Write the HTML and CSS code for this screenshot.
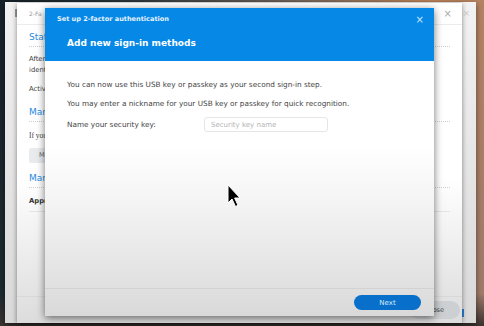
FILE: index.html
```html
<!DOCTYPE html>
<html lang="en">
<head>
    <meta charset="UTF-8">
    <meta name="viewport" content="width=device-width, initial-scale=1.0">
    <title>Set up 2-factor authentication</title>
    <link rel="stylesheet" href="styles.css">
</head>
<body>

    <div class="desktop">
        <!-- window furthest back -->
        <div class="window back-window">
            <div class="back-head"><span class="back-icon"></span><span class="back-close">&times;</span></div>
            <div class="back-foot"><span class="back-btn"></span></div>
        </div>

        <!-- personal settings window -->
        <div class="window settings-window">
            <div class="win-head">
                <span class="win-title">2-Fa</span>
                <span class="win-close">&times;</span>
            </div>
            <div class="win-body">
                <h3 class="section-title">Status</h3>
                <p class="line">After enabling, you will need to verify your<br>identity with a second sign-in step.</p>
                <p class="line">Active</p>
                <h3 class="section-title">Manage sign-in methods</h3>
                <p class="line serif">If you lose your device, use a backup code.</p>
                <span class="grey-btn">Manage</span>
                <h3 class="section-title">Manage trusted devices</h3>
                <p class="line bold">Approved devices</p>
            </div>
            <div class="win-foot">
                <span class="grey-btn pill">Close</span>
            </div>
        </div>

        <!-- the wizard -->
        <div class="window modal">
            <div class="modal-head">
                <div class="modal-bar">
                    <span class="modal-caption">Set up 2-factor authentication</span>
                    <span class="modal-close">&times;</span>
                </div>
                <h2 class="modal-title">Add new sign-in methods</h2>
            </div>
            <div class="modal-body">
                <p class="info">You can now use this USB key or passkey as your second sign-in step.</p>
                <p class="info">You may enter a nickname for your USB key or passkey for quick recognition.</p>
                <div class="field">
                    <label class="field-label" for="key-name">Name your security key:</label>
                    <input type="text" id="key-name" placeholder="Security key name">
                </div>
            </div>
            <div class="modal-foot">
                <button class="next-btn">Next</button>
            </div>
        </div>

        <svg class="cursor" width="14" height="24" viewBox="0 0 14 24">
            <path d="M1 1 L1 19 L5 15 L8.5 22.5 L11 21.3 L7.6 14 L13 14 Z" fill="#000" stroke="#fff" stroke-width="1"/>
        </svg>
    </div>

</body>
</html>
```
FILE: styles.css
```css
body {
    margin: 0;
    width: 484px;
    height: 326px;
    overflow: hidden;
    font-family: "DejaVu Sans", Verdana, sans-serif;
}

.desktop {
    position: relative;
    width: 484px;
    height: 326px;
    background:
        linear-gradient(to bottom, rgba(0, 0, 0, 0) 90%, #3b3330 100%),
        linear-gradient(100deg, #16222a 0%, #26343a 20%, #7a6a60 55%, #c98a5c 80%, #9d7a6c 100%);
}

.window {
    position: absolute;
    box-sizing: border-box;
    display: flex;
    flex-direction: column;
}

/* back-most window, only edges show */
.back-window {
    left: 5px;
    top: 2px;
    width: 471px;
    height: 321px;
    background: linear-gradient(#f2f2f2, #d9d9d9);
    box-shadow: 0 2px 6px rgba(0, 0, 0, 0.5);
}

.back-head {
    height: 22px;
    display: flex;
    align-items: center;
    justify-content: space-between;
    padding: 0 6px 0 10px;
}

.back-icon {
    width: 3px;
    height: 8px;
    background: #999;
}

.back-close {
    color: #ccc;
    font-size: 9px;
}

.back-foot {
    margin-top: auto;
    height: 20px;
    display: flex;
    justify-content: flex-end;
    align-items: center;
}

.back-btn {
    width: 4px;
    height: 8px;
    background: #2a7fd0;
    margin-right: 12px;
}

/* settings window */
.settings-window {
    left: 17px;
    top: 3px;
    width: 445px;
    height: 320px;
    background: linear-gradient(#ffffff 55%, #dcdcdc);
    box-shadow: 0 1px 5px rgba(0, 0, 0, 0.45);
}

.win-head {
    height: 21px;
    border-bottom: 1px solid #ececec;
    display: flex;
    align-items: center;
    justify-content: space-between;
    padding: 0 10px 0 12px;
}

.win-title {
    font-size: 6px;
    color: #9a9a9a;
}

.win-close {
    color: #aaa;
    font-size: 10px;
}

.win-body {
    padding: 4px 12px 0;
    display: flex;
    flex-direction: column;
    align-items: flex-start;
}

.section-title {
    align-self: stretch;
    margin: 0 0 7px;
    font-size: 9px;
    line-height: 11px;
    font-weight: normal;
    color: #2a8adf;
    padding: 3px 0;
    border-bottom: 1px dotted #cfcfcf;
}

.line {
    margin: 0 0 8px;
    font-size: 6.8px;
    line-height: 11px;
    color: #444;
}

.line + .section-title {
    margin-top: 1px;
}

.line.serif {
    font-family: "Liberation Serif", serif;
    font-size: 7.5px;
    margin-top: 1px;
    margin-bottom: 7px;
}

.line.bold {
    align-self: stretch;
    margin-top: 1px;
    font-weight: bold;
    color: #333;
    padding-bottom: 4px;
    border-bottom: 1px solid #e4e4e4;
}

.grey-btn {
    display: inline-block;
    background: #e8ecef;
    color: #666;
    font-size: 6.5px;
    line-height: 15px;
    padding: 0 10px;
    border-radius: 2px;
    margin-bottom: 7px;
}

.win-foot {
    margin-top: auto;
    height: 26px;
    border-top: 1px solid #d8d8d8;
    display: flex;
    justify-content: flex-end;
    align-items: center;
    padding-right: 2px;
}

.grey-btn.pill {
    margin: 0;
    border-radius: 10px;
    line-height: 18px;
    padding: 0 16px;
    background: #cdd0d2;
    color: #444;
}

/* wizard dialog */
.modal {
    left: 45px;
    top: 8px;
    width: 389px;
    height: 308px;
    background: linear-gradient(#ffffff 45%, #f3f3f3 65%, #d9d9d9 100%);
    box-shadow: 0 2px 8px rgba(0, 0, 0, 0.55);
}

.modal-head {
    height: 53px;
    background: #0588e6;
    color: #fff;
    padding: 0 12px;
}

.modal-bar {
    height: 22px;
    display: flex;
    align-items: center;
    justify-content: space-between;
}

.modal-caption {
    font-size: 6.55px;
    font-weight: bold;
    color: #e6f2fd;
}

.modal-close {
    font-size: 10px;
    color: #cfe7fb;
    margin-right: -2px;
}

.modal-title {
    margin: 8px 0 0 10px;
    font-size: 9px;
    font-weight: bold;
}

.modal-body {
    padding: 18px 22px 0;
    flex: 1;
}

.info {
    margin: 0 0 8px;
    font-size: 7.3px;
    line-height: 11px;
    color: #444;
}

.field {
    display: flex;
    align-items: center;
    margin-top: 4px;
}

.field-label {
    font-size: 7.3px;
    color: #444;
    width: 137px;
}

.field input {
    width: 124px;
    height: 15px;
    box-sizing: border-box;
    border: 1px solid #e4e6e8;
    border-radius: 3px;
    padding: 0 6px;
    font-family: inherit;
    font-size: 7px;
    color: #444;
    background: #fff;
}

.field input::placeholder {
    color: #b4b4b4;
}

.modal-foot {
    height: 27px;
    border-top: 1px solid #d2d2d2;
    display: flex;
    justify-content: flex-end;
    align-items: center;
    padding-right: 13px;
}

.next-btn {
    width: 67px;
    height: 15px;
    border: none;
    border-radius: 8px;
    background: #0870ca;
    color: #d6ebf9;
    font-family: inherit;
    font-size: 7px;
    padding: 0;
}

.cursor {
    position: absolute;
    left: 227px;
    top: 184px;
}
```
